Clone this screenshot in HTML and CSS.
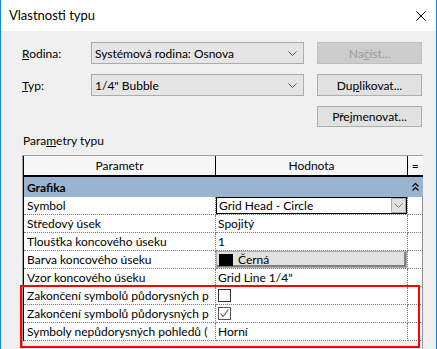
FILE: index.html
```html
<!DOCTYPE html>
<html lang="cs">
<head>
    <meta charset="UTF-8">
    <meta name="viewport" content="width=device-width, initial-scale=1.0">
    <title>Vlastnosti typu</title>
    <link rel="stylesheet" href="styles.css">
</head>
<body>
    <div class="window">
        <div class="titlebar">
            <span class="title">Vlastnosti typu</span>
            <svg class="close" width="10" height="10" viewBox="0 0 10 10">
                <path d="M0.5 0.5 L9.5 9.5 M9.5 0.5 L0.5 9.5" stroke="#000" stroke-width="1" fill="none"/>
            </svg>
        </div>

        <div class="content">
            <div class="form">
                <div class="form-row">
                    <label><u>R</u>odina:</label>
                    <div class="combo">
                        <span>Systémová rodina: Osnova</span>
                        <svg width="9" height="5" viewBox="0 0 9 5"><path d="M0.5 0.5 L4.5 4.5 L8.5 0.5" stroke="#555" fill="none"/></svg>
                    </div>
                    <button class="btn" disabled>Na<u>č</u>íst...</button>
                </div>
                <div class="form-row">
                    <label><u>T</u>yp:</label>
                    <div class="combo">
                        <span>1/4" Bubble</span>
                        <svg width="9" height="5" viewBox="0 0 9 5"><path d="M0.5 0.5 L4.5 4.5 L8.5 0.5" stroke="#555" fill="none"/></svg>
                    </div>
                    <button class="btn">Du<u>p</u>likovat...</button>
                </div>
                <div class="form-row short">
                    <button class="btn">Pře<u>j</u>menovat...</button>
                </div>
            </div>

            <div class="section-label">Para<u>m</u>etry typu</div>

            <div class="grid-frame">
                <table class="params">
                    <colgroup>
                        <col class="c-name">
                        <col class="c-value">
                        <col class="c-eq">
                    </colgroup>
                    <thead>
                        <tr>
                            <th>Parametr</th>
                            <th>Hodnota</th>
                            <th>=</th>
                        </tr>
                    </thead>
                    <tbody>
                        <tr class="group">
                            <td colspan="2">Grafika</td>
                            <td class="eq">
                                <svg width="7" height="8" viewBox="0 0 7 8">
                                    <path d="M0.5 3.5 L3.5 0.5 L6.5 3.5 M0.5 7.5 L3.5 4.5 L6.5 7.5" stroke="#000" stroke-width="1.2" fill="none"/>
                                </svg>
                            </td>
                        </tr>
                        <tr>
                            <td>Symbol</td>
                            <td class="val">
                                <div class="cell-combo">
                                    <span>Grid Head - Circle</span>
                                    <span class="drop">
                                        <svg width="9" height="5" viewBox="0 0 9 5"><path d="M0.5 0.5 L4.5 4.5 L8.5 0.5" stroke="#777" fill="none"/></svg>
                                    </span>
                                </div>
                            </td>
                            <td></td>
                        </tr>
                        <tr>
                            <td>Středový úsek</td>
                            <td class="val">Spojitý</td>
                            <td></td>
                        </tr>
                        <tr>
                            <td>Tloušťka koncového úseku</td>
                            <td class="val">1</td>
                            <td></td>
                        </tr>
                        <tr>
                            <td>Barva koncového úseku</td>
                            <td class="val">
                                <div class="color-btn"><span class="swatch"></span>Černá</div>
                            </td>
                            <td></td>
                        </tr>
                        <tr>
                            <td>Vzor koncového úseku</td>
                            <td class="val">Grid Line 1/4"</td>
                            <td></td>
                        </tr>
                        <tr>
                            <td>Zakončení symbolů půdorysných p</td>
                            <td class="val"><span class="check"></span></td>
                            <td></td>
                        </tr>
                        <tr>
                            <td>Zakončení symbolů půdorysných p</td>
                            <td class="val">
                                <span class="check checked">
                                    <svg width="11" height="11" viewBox="0 0 11 11"><path d="M1.5 5.5 L4 8.5 L9.5 1.5" stroke="#555" stroke-width="1.1" fill="none"/></svg>
                                </span>
                            </td>
                            <td></td>
                        </tr>
                        <tr>
                            <td>Symboly nepůdorysných pohledů (</td>
                            <td class="val">Horní</td>
                            <td></td>
                        </tr>
                    </tbody>
                </table>
            </div>
        </div>

        <div class="highlight"></div>
    </div>
</body>
</html>
```

FILE: styles.css
```css
body {
    margin: 0;
    padding: 0;
    font-family: Lato, "Liberation Sans", sans-serif;
    font-size: 12px;
    color: #000;
    background-color: #f0f0f0;
}

.window {
    position: relative;
    width: 437px;
    height: 349px;
    box-sizing: border-box;
    border-left: 1px solid #1883d7;
    border-right: 1px solid #1883d7;
    background-color: #f0f0f0;
    overflow: hidden;
}

.titlebar {
    height: 31px;
    background-color: #fff;
    display: flex;
    align-items: center;
    padding-left: 8px;
    padding-right: 10px;
}

.title {
    font-size: 13px;
    flex: 1;
    padding-bottom: 1px;
}

.close {
    display: block;
}

.content {
    padding: 11px 0 0 21px;
}

.form {
    width: 400px;
}

.form-row {
    display: flex;
    align-items: center;
    height: 22px;
    margin-bottom: 10px;
}

.form-row.short {
    height: 21px;
    margin-bottom: 0;
    justify-content: flex-end;
}

.form-row label {
    width: 69px;
}

.combo {
    width: 213px;
    height: 22px;
    box-sizing: border-box;
    border: 1px solid #acacac;
    background-color: #e5e5e5;
    display: flex;
    align-items: center;
    justify-content: space-between;
    padding: 0 6px 0 3px;
}

.btn {
    margin-left: auto;
    width: 105px;
    height: 22px;
    box-sizing: border-box;
    border: 1px solid #adadad;
    background-color: #e1e1e1;
    font-family: inherit;
    font-size: 12px;
    color: #000;
    padding: 0;
}

.form-row.short .btn {
    height: 21px;
}

.btn:disabled {
    background-color: #cccccc;
    border-color: #bfbfbf;
    color: #9a9a9a;
}

.section-label {
    line-height: 16px;
    margin: 6px 0 6px 1px;
}

.grid-frame {
    width: 401px;
    height: 200px;
    box-sizing: border-box;
    border: 1px solid #a0a0a0;
    border-bottom: none;
    padding-right: 1px;
}

.params {
    width: 399px;
    table-layout: fixed;
    border-collapse: collapse;
    border-left: 1px solid #000;
}

.c-name {
    width: 192px;
}

.c-value {
    width: 192px;
}

.c-eq {
    width: 15px;
}

.params th {
    height: 19px;
    padding: 0;
    font-weight: normal;
    background-color: #f7f7f7;
    border-right: 1px solid #000;
    border-bottom: 2px solid #000;
}

.params th:last-child {
    border-right: none;
}

.params td {
    height: 17px;
    padding: 0 0 0 3px;
    background-color: #fff;
    border-right: 1px dotted #808080;
    border-bottom: 1px dotted #808080;
    white-space: nowrap;
    overflow: hidden;
    line-height: 17px;
}

.params td.val {
    padding-left: 2px;
}

.params tr.group td {
    height: 20px;
    background-color: #99b4d1;
    font-weight: bold;
    border: none;
}

.params tr.group td.eq {
    padding: 0;
    text-align: center;
}

.params tr.group svg {
    display: block;
    margin: 0 auto;
}

.params td:has(.cell-combo),
.params td:has(.color-btn) {
    padding: 0;
}

.cell-combo {
    height: 17px;
    box-sizing: border-box;
    border: 1px solid #000;
    display: flex;
    align-items: center;
    justify-content: space-between;
    padding-left: 2px;
}

.drop {
    width: 15px;
    height: 15px;
    box-sizing: border-box;
    border: 1px solid #adadad;
    background-color: #e1e1e1;
    display: flex;
    align-items: center;
    justify-content: center;
}

.color-btn {
    height: 17px;
    box-sizing: border-box;
    background-color: #e1e1e1;
    border: 1px solid #adadad;
    box-shadow: inset -2px -2px 0 #808080;
    display: flex;
    align-items: center;
    padding-left: 2px;
}

.swatch {
    width: 14px;
    height: 12px;
    background-color: #000;
    margin-right: 5px;
}

.check {
    display: inline-block;
    width: 13px;
    height: 13px;
    box-sizing: border-box;
    border: 1px solid #333;
    vertical-align: middle;
    margin-top: -2px;
    background-color: #fff;
}

.check.checked {
    border-color: #555;
}

.check svg {
    display: block;
}

.highlight {
    position: absolute;
    left: 19px;
    top: 285px;
    width: 400px;
    height: 63px;
    box-sizing: border-box;
    border: 2px solid #ff0000;
}
```
